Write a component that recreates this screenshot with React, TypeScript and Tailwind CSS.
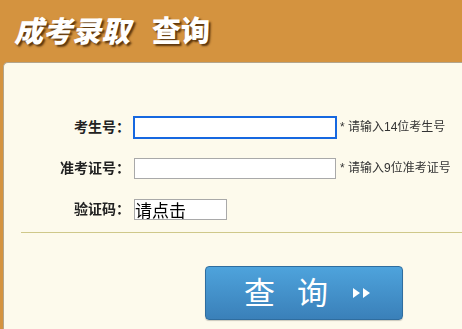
import { useState } from "react";

export default function App() {
    const [code, setCode] = useState("请点击");
    return (
        <div className="w-[462px] h-[329px] overflow-hidden bg-[#d4933f] font-['Liberation_Sans','Noto_Sans_CJK_SC',sans-serif]">
            <div className="h-[62px] pl-[14px] pt-[14px]">
                <h1 className="text-[29px] leading-[36px] font-black text-white [text-shadow:2px_2px_2px_rgba(60,30,0,0.8)] flex gap-[22px]">
                    <span className="italic">成考录取</span>
                    <span>查询</span>
                </h1>
            </div>
            <div className="ml-[3px] h-[267px] rounded-tl-[5px] border-t border-l border-[#b3a58c] bg-[#fdfaec] pt-[53px]">
                <div className="flex flex-col gap-[19px]">
                    <div className="flex items-center h-[22px]">
                        <label className="w-[126px] text-right text-[14px] font-bold text-[#222]">考生号：</label>
                        <input
                            autoFocus
                            className="ml-[3px] w-[204px] h-[23px] bg-white border-2 border-[#1668e0] outline-none px-1 text-[13px]"
                        />
                        <span className="ml-[3px] text-[12px] text-[#333]">* 请输入14位考生号</span>
                    </div>
                    <div className="flex items-center h-[22px]">
                        <label className="w-[126px] text-right text-[14px] font-bold text-[#222]">准考证号：</label>
                        <input className="ml-[4px] w-[202px] h-[21px] bg-white border border-[#a9a9a9] outline-none px-1 text-[13px]" />
                        <span className="ml-[4px] text-[12px] text-[#333]">* 请输入9位准考证号</span>
                    </div>
                    <div className="flex items-center h-[22px]">
                        <label className="w-[126px] text-right text-[14px] font-bold text-[#222]">验证码：</label>
                        <input
                            value={code}
                            onChange={(e) => setCode(e.target.value)}
                            className="ml-[4px] w-[93px] h-[21px] bg-white border border-[#a9a9a9] outline-none px-0 text-[17px] leading-[19px] text-black"
                        />
                    </div>
                </div>
                <div className="ml-[17px] mt-[12px] border-t border-[#cfc88a]" />
                <div className="mt-[33px] pl-[201px]">
                    <button className="w-[198px] h-[54px] pl-[10px] rounded-[4px] border border-[#2f6d9f] bg-gradient-to-b from-[#4ea3dc] to-[#3a80b9] text-white flex items-center justify-center shadow-[0_1px_1px_rgba(0,0,0,0.2)]">
                        <span className="text-[31px] leading-none tracking-[22px]">查询</span>
                        <svg width="22" height="14" viewBox="0 0 22 14" className="ml-[2px]">
                            <path d="M1 2 L8 7 L1 12 Z" fill="white" />
                            <path d="M11 2 L18 7 L11 12 Z" fill="white" />
                        </svg>
                    </button>
                </div>
            </div>
        </div>
    );
}
